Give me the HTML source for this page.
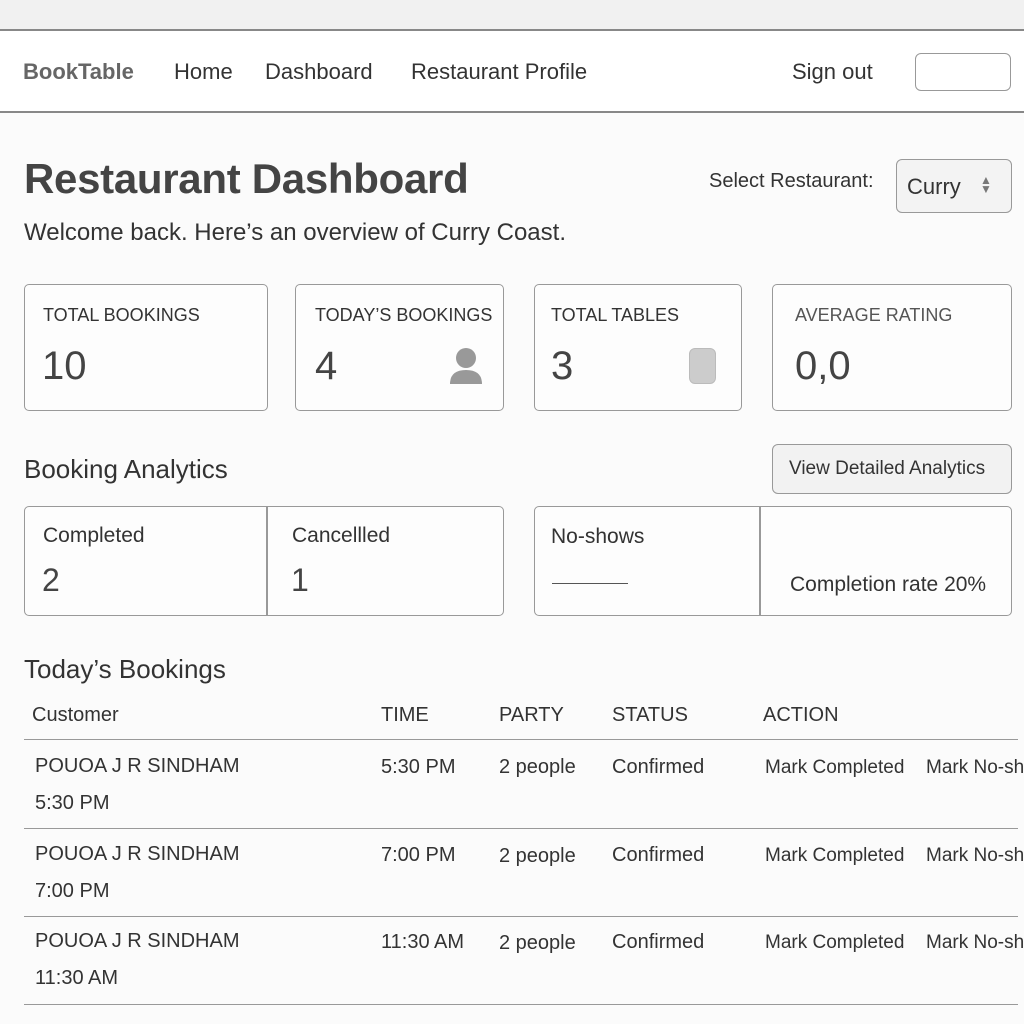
<!DOCTYPE html><html><head><style>
*{margin:0;padding:0;box-sizing:border-box}
body{width:1024px;height:1024px;background:#fbfbfb;font-family:"Liberation Sans",sans-serif;color:#333;position:relative;overflow:hidden}
.a{position:absolute;white-space:nowrap}
.box{position:absolute;border:1.5px solid #999;border-radius:5px;background:#fdfdfd}
.line{position:absolute;left:24px;width:994px;height:1px;background:#999}
</style></head><body>
<div class="a" style="left:0;top:0;width:1024px;height:29px;background:#f1f1f1"></div>
<div class="a" style="left:0;top:29px;width:1024px;height:84px;background:#fff;border-top:2px solid #888;border-bottom:2px solid #888"></div>
<div class="a" style="left:23px;top:59px;font-size:22px;font-weight:bold;color:#666">BookTable</div>
<div class="a" style="left:174px;top:59px;font-size:22px">Home</div>
<div class="a" style="left:265px;top:59px;font-size:22px">Dashboard</div>
<div class="a" style="left:411px;top:59px;font-size:22px">Restaurant Profile</div>
<div class="a" style="left:792px;top:59px;font-size:22px">Sign out</div>
<div class="box" style="left:915px;top:53px;width:96px;height:38px;border-radius:6px;background:#fff"></div>
<div class="a" style="left:24px;top:155px;font-size:42px;font-weight:bold;color:#444;letter-spacing:-0.3px">Restaurant Dashboard</div>
<div class="a" style="left:709px;top:170px;font-size:20px">Select Restaurant:</div>
<div class="box" style="left:896px;top:159px;width:116px;height:54px;background:#f3f3f3;border-radius:6px"></div>
<div class="a" style="left:907px;top:174px;font-size:22px">Curry</div>
<div class="a" style="left:980px;top:176px;font-size:12px;color:#777;line-height:9px">▲<br>▼</div>
<div class="a" style="left:24px;top:219px;font-size:24px">Welcome back. Here’s an overview of  Curry Coast.</div>

<div class="box" style="left:24px;top:284px;width:244px;height:127px"></div>
<div class="box" style="left:295px;top:284px;width:209px;height:127px"></div>
<div class="box" style="left:534px;top:284px;width:208px;height:127px"></div>
<div class="box" style="left:772px;top:284px;width:240px;height:127px"></div>
<div class="a" style="left:43px;top:305px;font-size:18px">TOTAL BOOKINGS</div>
<div class="a" style="left:315px;top:305px;font-size:18px">TODAY’S BOOKINGS</div>
<div class="a" style="left:551px;top:305px;font-size:18px">TOTAL TABLES</div>
<div class="a" style="left:795px;top:305px;font-size:18px;color:#555">AVERAGE RATING</div>
<div class="a" style="left:42px;top:344px;font-size:40px;color:#444">10</div>
<div class="a" style="left:315px;top:344px;font-size:40px;color:#444">4</div>
<div class="a" style="left:551px;top:344px;font-size:40px;color:#444">3</div>
<div class="a" style="left:795px;top:344px;font-size:40px;color:#444">0,0</div>
<svg class="a" style="left:449px;top:347px" width="34" height="38"><circle cx="17" cy="11" r="10" fill="#999"/><path d="M1 37 Q1 23 17 23 Q33 23 33 37Z" fill="#999"/></svg>
<div class="a" style="left:689px;top:348px;width:27px;height:36px;background:#ccc;border-radius:6px;border:1px solid #bbb"></div>

<div class="a" style="left:24px;top:454px;font-size:26px">Booking Analytics</div>
<div class="box" style="left:772px;top:444px;width:240px;height:50px;background:#f2f2f2;border-radius:6px"></div>
<div class="a" style="left:789px;top:458px;font-size:19px">View Detailed Analytics</div>
<div class="box" style="left:24px;top:506px;width:480px;height:110px"></div>
<div class="a" style="left:266px;top:506px;width:1.5px;height:110px;background:#999"></div>
<div class="box" style="left:534px;top:506px;width:478px;height:110px"></div>
<div class="a" style="left:759px;top:506px;width:1.5px;height:110px;background:#999"></div>
<div class="a" style="left:43px;top:524px;font-size:21px">Completed</div>
<div class="a" style="left:42px;top:562px;font-size:32px;color:#444">2</div>
<div class="a" style="left:292px;top:524px;font-size:21px">Cancellled</div>
<div class="a" style="left:291px;top:562px;font-size:32px;color:#444">1</div>
<div class="a" style="left:551px;top:525px;font-size:21px">No-shows</div>
<div class="a" style="left:552px;top:583px;width:76px;height:1px;background:#555"></div>
<div class="a" style="left:790px;top:573px;font-size:21px">Completion rate 20%</div>

<div class="a" style="left:24px;top:654px;font-size:26px">Today’s Bookings</div>
<div class="a" style="left:32px;top:704px;font-size:20px">Customer</div>
<div class="a" style="left:381px;top:704px;font-size:20px">TIME</div>
<div class="a" style="left:499px;top:704px;font-size:20px">PARTY</div>
<div class="a" style="left:612px;top:704px;font-size:20px">STATUS</div>
<div class="a" style="left:763px;top:704px;font-size:20px">ACTION</div>
<div class="line" style="top:739px"></div>
<div class="line" style="top:828px"></div>
<div class="line" style="top:916px"></div>
<div class="line" style="top:1004px"></div>

<div class="a" style="left:35px;top:748px;font-size:20px;line-height:37px">POUOA J R SINDHAM<br>5:30 PM</div>
<div class="a" style="left:381px;top:756px;font-size:20px">5:30 PM</div>
<div class="a" style="left:499px;top:756px;font-size:20px">2 people</div>
<div class="a" style="left:612px;top:756px;font-size:20px">Confirmed</div>
<div class="a" style="left:765px;top:757px;font-size:19px">Mark Completed</div>
<div class="a" style="left:926px;top:757px;font-size:19px">Mark No-show</div>

<div class="a" style="left:35px;top:836px;font-size:20px;line-height:37px">POUOA J R SINDHAM<br>7:00 PM</div>
<div class="a" style="left:381px;top:844px;font-size:20px">7:00 PM</div>
<div class="a" style="left:499px;top:845px;font-size:20px">2 people</div>
<div class="a" style="left:612px;top:844px;font-size:20px">Confirmed</div>
<div class="a" style="left:765px;top:845px;font-size:19px">Mark Completed</div>
<div class="a" style="left:926px;top:845px;font-size:19px">Mark No-show</div>

<div class="a" style="left:35px;top:923px;font-size:20px;line-height:37px">POUOA J R SINDHAM<br>11:30 AM</div>
<div class="a" style="left:381px;top:931px;font-size:20px">11:30 AM</div>
<div class="a" style="left:499px;top:932px;font-size:20px">2 people</div>
<div class="a" style="left:612px;top:931px;font-size:20px">Confirmed</div>
<div class="a" style="left:765px;top:932px;font-size:19px">Mark Completed</div>
<div class="a" style="left:926px;top:932px;font-size:19px">Mark No-show</div>
</body></html>
